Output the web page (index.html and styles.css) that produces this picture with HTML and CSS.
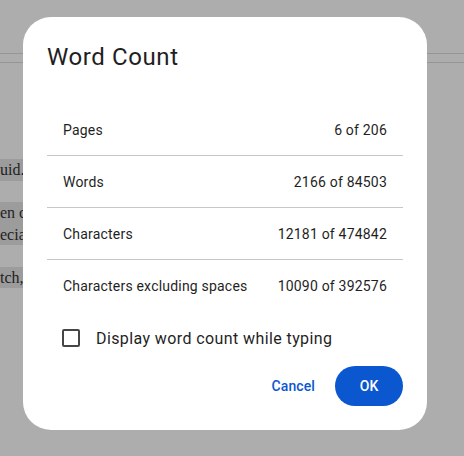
FILE: index.html
```html
<!DOCTYPE html>
<html>
<head>
<meta charset="utf-8">
<link rel="stylesheet" href="styles.css">
</head>
<body>
<div class="doc">
  <div class="ruler"></div>
  <div class="doc-text">
    <div class="line hl"><span class="end">uid.</span></div>
    <div class="line"></div>
    <div class="line hl"><span>en c</span></div>
    <div class="line hl"><span>ecia</span></div>
    <div class="line"></div>
    <div class="line hl"><span class="end2">tch,</span></div>
  </div>
</div>

<div class="dialog" role="dialog">
  <h1 class="title">Word Count</h1>
  <div class="stats">
    <div class="row"><span>Pages</span><span>6 of 206</span></div>
    <div class="row"><span>Words</span><span>2166 of 84503</span></div>
    <div class="row"><span>Characters</span><span>12181 of 474842</span></div>
    <div class="row"><span>Characters excluding spaces</span><span>10090 of 392576</span></div>
  </div>
  <label class="check">
    <span class="box"></span>
    <span class="check-label">Display word count while typing</span>
  </label>
  <div class="actions">
    <button class="btn text">Cancel</button>
    <button class="btn filled">OK</button>
  </div>
</div>
</body>
</html>
```

FILE: styles.css
```css
html, body {
  margin: 0;
  padding: 0;
}
body {
  width: 464px;
  height: 456px;
  overflow: hidden;
  background: #adadad;
  position: relative;
  font-family: Roboto, "Liberation Sans", sans-serif;
}

.doc {
  padding-top: 53px;
}
.ruler {
  height: 8px;
  border-top: 1px solid #969696;
  border-bottom: 1px solid #969696;
}
.doc-text {
  margin-top: 96px;
  width: 30px;
  font-family: "Liberation Serif", serif;
  font-size: 16px;
  color: #222;
}
.line {
  height: 21.5px;
  line-height: 21.5px;
  white-space: nowrap;
}
.line.hl {
  background: #9c9c9c;
}
.line .end {
  padding-left: 0;
}

.dialog {
  position: absolute;
  left: 23px;
  top: 17px;
  width: 404px;
  height: 413px;
  box-sizing: border-box;
  padding: 24px;
  background: #fff;
  border-radius: 28px;
  display: flex;
  flex-direction: column;
}
.title {
  margin: 0;
  font-size: 24px;
  line-height: 32px;
  font-weight: 400;
  letter-spacing: 0.6px;
  color: #1f1f1f;
}
.stats {
  margin-top: 31px;
}
.row {
  height: 52px;
  box-sizing: border-box;
  display: flex;
  justify-content: space-between;
  align-items: center;
  padding: 0 16px;
  font-size: 14px;
  letter-spacing: 0.2px;
  color: #1f1f1f;
  border-bottom: 1px solid #c7c7c7;
}
.row:last-child {
  border-bottom: none;
}
.check {
  margin-top: 6px;
  height: 40px;
  display: flex;
  align-items: center;
  padding-left: 15px;
  gap: 16px;
}
.box {
  width: 18px;
  height: 18px;
  box-sizing: border-box;
  border: 2px solid #444746;
  border-radius: 2px;
}
.check-label {
  font-size: 16px;
  letter-spacing: 0.4px;
  color: #1f1f1f;
}
.actions {
  margin-top: 8px;
  display: flex;
  justify-content: flex-end;
  gap: 8px;
}
.btn {
  height: 40px;
  border: none;
  border-radius: 20px;
  font-family: Roboto, "Liberation Sans", sans-serif;
  font-size: 14px;
  font-weight: 500;
  letter-spacing: 0.1px;
  cursor: pointer;
}
.btn.text {
  background: transparent;
  color: #0b57d0;
  padding: 0 12px;
}
.btn.filled {
  background: #0b57d0;
  color: #fff;
  padding: 0 24px;
  min-width: 68px;
}
```
